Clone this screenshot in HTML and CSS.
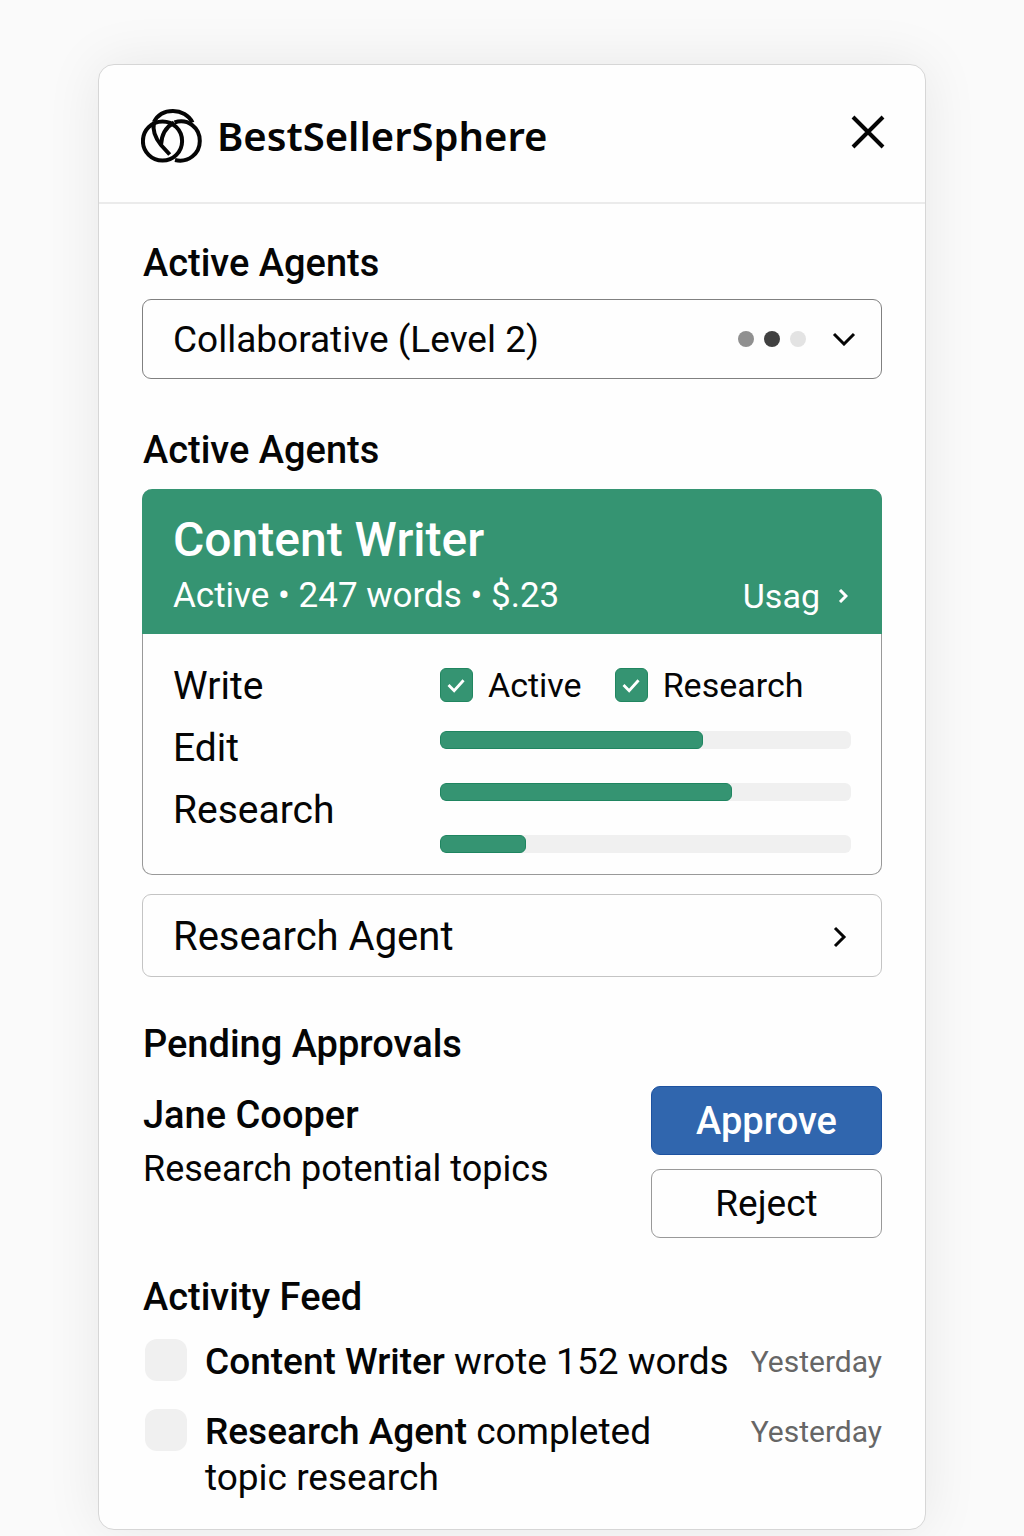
FILE: index.html
```html
<!DOCTYPE html>
<html lang="en">
<head>
<meta charset="utf-8">
<meta name="viewport" content="width=device-width, initial-scale=1">
<title>BestSellerSphere</title>
<link rel="stylesheet" href="styles.css">
</head>
<body>
<main class="panel">
  <header class="panel-header">
    <div class="brand">
      <svg class="logo" viewBox="0 0 62 54" aria-hidden="true">
        <circle cx="21.500" cy="32" r="19.600"/>
        <path d="M13 13C17 5 24 2 32 2C40 2 48 6 51.500 13.500"/>
        <path d="M33.500 13.500C47 9 58.800 19 58.800 32C58.800 45 47 54 34 51"/>
        <path d="M13 13C11 23 15 30 20 36L28.700 45.500"/>
        <path d="M33 13.500C25 18 20.500 25 20 36"/>
      </svg>
      <h1 class="brand-name">BestSellerSphere</h1>
    </div>
    <button class="close" type="button" aria-label="Close">
      <svg viewBox="0 0 34 34" aria-hidden="true"><path d="M2 2L32 32M32 2L2 32"/></svg>
    </button>
  </header>

  <div class="panel-body">
    <section class="section mode">
      <label class="section-title" for="mode">Active Agents</label>
      <div class="mode-field">
        <select class="mode-select" id="mode"><option>Collaborative (Level 2)</option></select>
        <div class="mode-marks" aria-hidden="true">
          <span class="dot dot-mid"></span>
          <span class="dot dot-dark"></span>
          <span class="dot dot-light"></span>
          <svg class="chevron-down" viewBox="0 0 24 14"><path d="M2 2L12 12L22 2"/></svg>
        </div>
      </div>
    </section>

    <section class="section agents">
      <h2 class="section-title">Active Agents</h2>
      <article class="agent">
        <header class="agent-header">
          <h3 class="agent-name">Content Writer</h3>
          <div class="agent-meta">
            <span class="agent-stats">Active • 247 words • $.23</span>
            <a class="usage" href="#usage">Usag
              <svg viewBox="0 0 10 14" aria-hidden="true"><path d="M2 1L8 7L2 13"/></svg>
            </a>
          </div>
        </header>
        <div class="agent-body">
          <ul class="skills">
            <li>Write</li>
            <li>Edit</li>
            <li>Research</li>
          </ul>
          <div class="levels">
            <div class="checks">
              <label class="check"><input type="checkbox" checked>Active</label>
              <label class="check"><input type="checkbox" checked>Research</label>
            </div>
            <progress class="bar" value="64" max="100" aria-label="Write"></progress>
            <progress class="bar" value="71" max="100" aria-label="Edit"></progress>
            <progress class="bar" value="21" max="100" aria-label="Research"></progress>
          </div>
        </div>
      </article>
      <button class="agent-row" type="button">Research Agent
        <svg viewBox="0 0 14 22" aria-hidden="true"><path d="M2 2L11 11L2 20"/></svg>
      </button>
    </section>

    <section class="section">
      <h2 class="section-title">Pending Approvals</h2>
      <div class="approval">
        <div class="request">
          <h3 class="request-name">Jane Cooper</h3>
          <p class="request-text">Research potential topics</p>
        </div>
        <div class="actions">
          <button class="button button-primary" type="button">Approve</button>
          <button class="button" type="button">Reject</button>
        </div>
      </div>
    </section>

    <section class="section activity">
      <h2 class="section-title">Activity Feed</h2>
      <ul class="feed">
        <li class="feed-item">
          <span class="avatar"></span>
          <p class="feed-text"><strong>Content Writer</strong> wrote 152 words</p>
          <time class="feed-time">Yesterday</time>
        </li>
        <li class="feed-item">
          <span class="avatar"></span>
          <p class="feed-text"><strong>Research Agent</strong> completed topic research</p>
          <time class="feed-time">Yesterday</time>
        </li>
      </ul>
    </section>
  </div>
</main>
</body>
</html>
```
FILE: styles.css
```css
* {
  box-sizing: border-box;
}

body {
  margin: 0;
  padding: 64px 98px 7px;
  background: #fafafa;
  color: #050505;
  font-family: Roboto, "Liberation Sans", sans-serif;
  font-size: 37px;
  line-height: 46px;
}

h1, h2, h3, p, ul {
  margin: 0;
  padding: 0;
}

ul {
  list-style: none;
}

button, select {
  margin: 0;
  font: inherit;
  color: inherit;
  cursor: pointer;
}

svg {
  display: block;
  fill: none;
  stroke: currentColor;
  stroke-width: 3;
}

.panel {
  background: #fefefe;
  border: 1px solid #d6d6d6;
  border-radius: 16px;
  box-shadow: 0 0 56px rgba(0, 0, 0, 0.08);
}

.panel-header {
  display: flex;
  align-items: center;
  justify-content: space-between;
  height: 139px;
  padding: 0 40px 0 42px;
  border-bottom: 2px solid #ebebeb;
}

.brand {
  display: flex;
  align-items: center;
  gap: 14px;
  padding-top: 4px;
}

.logo {
  width: 62px;
  height: 54px;
  stroke-width: 4;
}

.brand-name {
  font-family: "Noto Sans", sans-serif;
  font-size: 40px;
  font-weight: 600;
}

.close {
  padding: 0 0 4px;
  border: 0;
  background: none;
}

.close svg {
  width: 34px;
  height: 34px;
  stroke-width: 4;
}

.panel-body {
  display: grid;
  gap: 38px;
  padding: 38px 43px 28px;
}

.section {
  display: grid;
}

.mode {
  padding-bottom: 12px;
}

.agents {
  padding-bottom: 8px;
}

.section-title {
  margin-bottom: 13px;
  padding-left: 1px;
  font-size: 38px;
  font-weight: 500;
  line-height: 43px;
}

.mode .section-title {
  margin-bottom: 14px;
}

.agents .section-title {
  margin-bottom: 17px;
}

.activity .section-title {
  margin-bottom: 20px;
}

.mode-field {
  position: relative;
}

.mode-select {
  display: block;
  width: 100%;
  height: 80px;
  padding: 2px 160px 0 30px;
  appearance: none;
  background: #fefefe;
  border: 1px solid #808080;
  border-radius: 9px;
}

.mode-marks {
  position: absolute;
  inset: 0 26px 0 auto;
  display: flex;
  align-items: center;
  gap: 10px;
  pointer-events: none;
}

.dot {
  width: 16px;
  height: 16px;
  border-radius: 50%;
}

.dot-mid {
  background: #909090;
}

.dot-dark {
  background: #404040;
}

.dot-light {
  background: #e3e3e3;
}

.chevron-down {
  width: 24px;
  height: 14px;
  margin-left: 16px;
}

.agent {
  margin-bottom: 19px;
  border: 1px solid #999;
  border-top: 0;
  border-radius: 10px;
}

.agent-header {
  margin: 0 -1px;
  padding: 24px 34px 9px 31px;
  background: #359472;
  border-radius: 10px 10px 0 0;
  color: #fff;
}

.agent-name {
  font-size: 48px;
  font-weight: 500;
  line-height: 54px;
}

.agent-meta {
  display: flex;
  justify-content: space-between;
  font-size: 34px;
  line-height: 58px;
}

.agent-stats {
  font-size: 35px;
}

.usage {
  display: flex;
  align-items: center;
  gap: 18px;
  color: inherit;
  text-decoration: none;
}

.usage svg {
  width: 10px;
  height: 14px;
}

.agent-body {
  display: grid;
  grid-template-columns: 251fr 411fr;
  gap: 16px;
  padding: 21px 30px;
}

.skills {
  font-size: 39px;
  line-height: 62px;
}

.levels {
  display: grid;
  gap: 34px;
  align-content: start;
  padding-top: 13px;
}

.checks {
  display: flex;
  gap: 33px;
  height: 34px;
  margin-bottom: -5px;
}

.check {
  display: flex;
  align-items: center;
  gap: 15px;
  font-size: 34px;
}

.check input {
  width: 33px;
  height: 34px;
  margin: 0;
  appearance: none;
  border: 1px solid #218660;
  border-radius: 6px;
  background: #359472 url("data:image/svg+xml,%3Csvg xmlns='http://www.w3.org/2000/svg' viewBox='0 0 33 34'%3E%3Cpath d='M8 17l6 6 10-11' fill='none' stroke='white' stroke-width='3'/%3E%3C/svg%3E") center / contain no-repeat;
}

.bar {
  display: block;
  width: 100%;
  height: 18px;
  appearance: none;
  border: 0;
  border-radius: 6px;
  background: #f0f0f0;
  overflow: hidden;
}

.bar::-webkit-progress-bar {
  background: #f0f0f0;
}

.bar::-webkit-progress-value {
  background: #359472;
  border: 1px solid #1f8560;
  border-radius: 6px;
}

.agent-row {
  display: flex;
  align-items: center;
  justify-content: space-between;
  height: 83px;
  padding: 2px 34px 0 30px;
  background: #fefefe;
  border: 1px solid #c4c4c4;
  border-radius: 9px;
  font-size: 40px;
}

.agent-row svg {
  width: 14px;
  height: 22px;
}

.approval {
  display: flex;
  justify-content: space-between;
  padding: 7px 0 0 1px;
}

.request-name {
  padding-top: 2px;
  font-size: 38px;
  font-weight: 500;
  line-height: 54px;
}

.request-text {
  font-size: 36px;
  line-height: 54px;
}

.actions {
  display: grid;
  gap: 14px;
  width: 231px;
}

.button {
  height: 69px;
  background: #fefefe;
  border: 1px solid #999;
  border-radius: 9px;
}

.button-primary {
  background: #3066ae;
  border-color: #1d52a0;
  color: #fff;
  font-size: 38px;
  font-weight: 500;
}

.feed {
  display: grid;
  gap: 24px;
}

.feed-item {
  display: grid;
  grid-template-columns: 42px 1fr auto;
  column-gap: 18px;
  align-items: start;
  padding-left: 3px;
}

.avatar {
  height: 42px;
  border-radius: 12px;
  background: #f0f0f0;
}

.feed-text strong {
  font-weight: 500;
}

.feed-time {
  color: #666;
  font-size: 30px;
}
```
